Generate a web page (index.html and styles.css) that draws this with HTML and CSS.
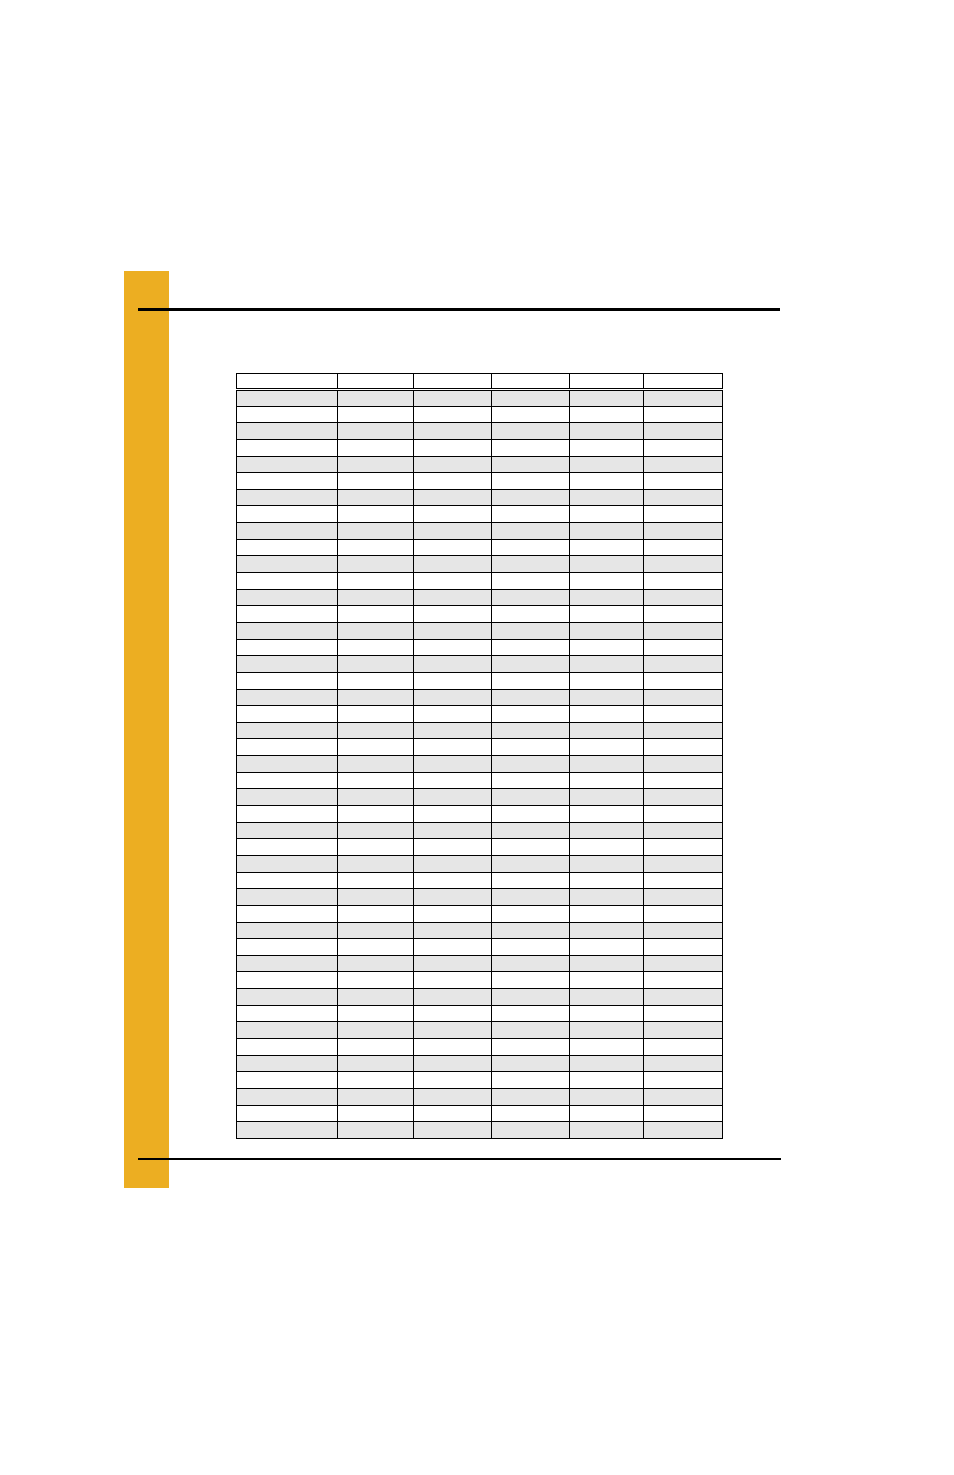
FILE: index.html
```html
<!DOCTYPE html>
<html>
<head>
<meta charset="utf-8">
<link rel="stylesheet" href="styles.css">
</head>
<body>
<div class="page">
  <div class="rule-top"></div>
  <table class="grid">
    <colgroup>
      <col class="c1"><col class="c2"><col class="c3"><col class="c4"><col class="c5"><col class="c6">
    </colgroup>
    <thead>
      <tr class="head"><td></td><td></td><td></td><td></td><td></td><td></td></tr>
    </thead>
    <tbody>
      <tr class="g"><td></td><td></td><td></td><td></td><td></td><td></td></tr>
      <tr><td></td><td></td><td></td><td></td><td></td><td></td></tr>
      <tr class="g"><td></td><td></td><td></td><td></td><td></td><td></td></tr>
      <tr><td></td><td></td><td></td><td></td><td></td><td></td></tr>
      <tr class="g"><td></td><td></td><td></td><td></td><td></td><td></td></tr>
      <tr><td></td><td></td><td></td><td></td><td></td><td></td></tr>
      <tr class="g"><td></td><td></td><td></td><td></td><td></td><td></td></tr>
      <tr><td></td><td></td><td></td><td></td><td></td><td></td></tr>
      <tr class="g"><td></td><td></td><td></td><td></td><td></td><td></td></tr>
      <tr><td></td><td></td><td></td><td></td><td></td><td></td></tr>
      <tr class="g"><td></td><td></td><td></td><td></td><td></td><td></td></tr>
      <tr><td></td><td></td><td></td><td></td><td></td><td></td></tr>
      <tr class="g"><td></td><td></td><td></td><td></td><td></td><td></td></tr>
      <tr><td></td><td></td><td></td><td></td><td></td><td></td></tr>
      <tr class="g"><td></td><td></td><td></td><td></td><td></td><td></td></tr>
      <tr><td></td><td></td><td></td><td></td><td></td><td></td></tr>
      <tr class="g"><td></td><td></td><td></td><td></td><td></td><td></td></tr>
      <tr><td></td><td></td><td></td><td></td><td></td><td></td></tr>
      <tr class="g"><td></td><td></td><td></td><td></td><td></td><td></td></tr>
      <tr><td></td><td></td><td></td><td></td><td></td><td></td></tr>
      <tr class="g"><td></td><td></td><td></td><td></td><td></td><td></td></tr>
      <tr><td></td><td></td><td></td><td></td><td></td><td></td></tr>
      <tr class="g"><td></td><td></td><td></td><td></td><td></td><td></td></tr>
      <tr><td></td><td></td><td></td><td></td><td></td><td></td></tr>
      <tr class="g"><td></td><td></td><td></td><td></td><td></td><td></td></tr>
      <tr><td></td><td></td><td></td><td></td><td></td><td></td></tr>
      <tr class="g"><td></td><td></td><td></td><td></td><td></td><td></td></tr>
      <tr><td></td><td></td><td></td><td></td><td></td><td></td></tr>
      <tr class="g"><td></td><td></td><td></td><td></td><td></td><td></td></tr>
      <tr><td></td><td></td><td></td><td></td><td></td><td></td></tr>
      <tr class="g"><td></td><td></td><td></td><td></td><td></td><td></td></tr>
      <tr><td></td><td></td><td></td><td></td><td></td><td></td></tr>
      <tr class="g"><td></td><td></td><td></td><td></td><td></td><td></td></tr>
      <tr><td></td><td></td><td></td><td></td><td></td><td></td></tr>
      <tr class="g"><td></td><td></td><td></td><td></td><td></td><td></td></tr>
      <tr><td></td><td></td><td></td><td></td><td></td><td></td></tr>
      <tr class="g"><td></td><td></td><td></td><td></td><td></td><td></td></tr>
      <tr><td></td><td></td><td></td><td></td><td></td><td></td></tr>
      <tr class="g"><td></td><td></td><td></td><td></td><td></td><td></td></tr>
      <tr><td></td><td></td><td></td><td></td><td></td><td></td></tr>
      <tr class="g"><td></td><td></td><td></td><td></td><td></td><td></td></tr>
      <tr><td></td><td></td><td></td><td></td><td></td><td></td></tr>
      <tr class="g"><td></td><td></td><td></td><td></td><td></td><td></td></tr>
      <tr><td></td><td></td><td></td><td></td><td></td><td></td></tr>
      <tr class="g"><td></td><td></td><td></td><td></td><td></td><td></td></tr>
    </tbody>
  </table>
  <div class="rule-bottom"></div>
</div>
</body>
</html>
```

FILE: styles.css
```css
html, body {
  margin: 0;
  padding: 0;
  background: #ffffff;
  font-family: "Liberation Sans", Arial, sans-serif;
}

.page {
  margin: 271px 0 0 124px;
  width: 657px;
  height: 917px;
  box-sizing: border-box;
  padding: 37px 0 0 14px;
  background: linear-gradient(#ecae22, #ecae22) no-repeat left top / 45px 100%;
}

.rule-top {
  width: 642px;
  height: 3px;
  background: #000000;
}

.grid {
  margin: 62px 0 0 98px;
  border-collapse: collapse;
  table-layout: fixed;
  width: 486px;
  background: #ffffff;
}

.c1 { width: 101px; }
.c2 { width: 76px; }
.c3 { width: 78px; }
.c4 { width: 78px; }
.c5 { width: 74px; }
.c6 { width: 79px; }

.grid td {
  border: 1px solid #000000;
  padding: 0;
}

.grid tr {
  height: 16.65px;
}

.grid tr.head {
  height: 16px;
}

.grid tr.head td {
  border-bottom: 3px double #000000;
}

.grid tr.g td {
  background: #e6e6e6;
}

.rule-bottom {
  margin-top: 19px;
  width: 643px;
  height: 2px;
  background: #000000;
}
```
